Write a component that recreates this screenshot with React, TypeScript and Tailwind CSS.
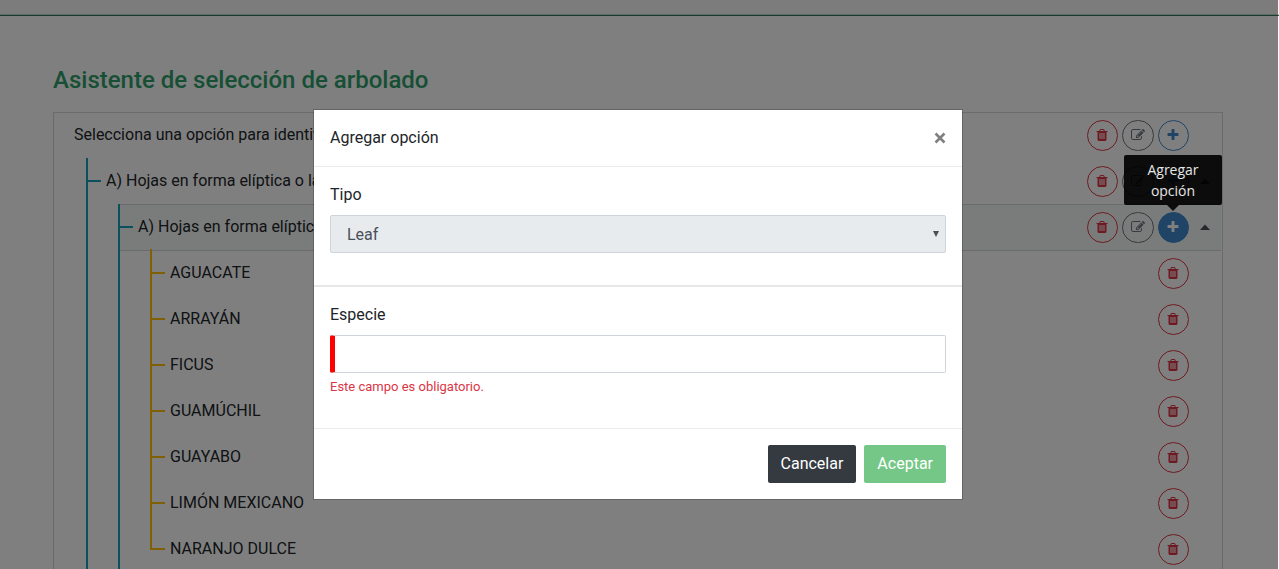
import { useState } from "react";
import type { ReactNode } from "react";

const TRASH =
  "M704 1376v-704q0-14-9-23t-23-9h-64q-14 0-23 9t-9 23v704q0 14 9 23t23 9h64q14 0 23-9t9-23zm256 0v-704q0-14-9-23t-23-9h-64q-14 0-23 9t-9 23v704q0 14 9 23t23 9h64q14 0 23-9t9-23zm256 0v-704q0-14-9-23t-23-9h-64q-14 0-23 9t-9 23v704q0 14 9 23t23 9h64q14 0 23-9t9-23zm-544-992h448l-48-117q-7-9-17-11h-317q-10 2-17 11zm928 32v64q0 14-9 23t-23 9h-96v948q0 83-47 143.5t-113 60.5h-832q-66 0-113-58.5t-47-141.5v-952h-96q-14 0-23-9t-9-23v-64q0-14 9-23t23-9h309l70-167q15-37 54-63t79-26h320q40 0 79 26t54 63l70 167h309q14 0 23 9t9 23z";
const EDIT =
  "M888 1184l116-116-152-152-116 116v56h96v96h56zm440-720q-16-16-33 1l-350 350q-17 17-1 33t33-1l350-350q17-17 1-33zm80 594v190q0 119-84.5 203.5t-203.5 84.5h-832q-119 0-203.5-84.5t-84.5-203.5v-832q0-119 84.5-203.5t203.5-84.5h832q63 0 117 25 15 7 18 23 3 17-9 29l-49 49q-14 14-32 8-23-6-45-6h-832q-66 0-113 47t-47 113v832q0 66 47 113t113 47h832q66 0 113-47t47-113v-126q0-13 9-22l64-64q15-15 35-7t20 29zm-96-738l288 288-672 672h-288v-288zm444 132l-92 92-288-288 92-92q28-28 68-28t68 28l152 152q28 28 28 68t-28 68z";
const PLUS =
  "M1600 736v192q0 40-28 68t-68 28h-416v416q0 40-28 68t-68 28h-192q-40 0-68-28t-28-68v-416h-416q-40 0-68-28t-28-68v-192q0-40 28-68t68-28h416v-416q0-40 28-68t68-28h192q40 0 68 28t28 68v416h416q40 0 68 28t28 68z";

function Icon({ d }: { d: string }) {
  return (
    <svg viewBox="0 0 1792 1792" className="size-3.5" fill="currentColor" aria-hidden="true">
      <path d={d} />
    </svg>
  );
}

const round = "flex h-[31px] items-center justify-center rounded-full border pb-px";

function DeleteButton() {
  return (
    <button aria-label="Eliminar" className={`${round} w-[31px] border-[#dc3545] pr-px text-[#dc3545]`}>
      <Icon d={TRASH} />
    </button>
  );
}

function EditButton() {
  return (
    <button aria-label="Editar" className={`${round} w-8 border-[#6c757d] text-[#6c757d]`}>
      <Icon d={EDIT} />
    </button>
  );
}

function AddButton({ active = false }: { active?: boolean }) {
  const tone = active ? "bg-[#3f88cc] text-white" : "text-[#3f88cc]";
  return (
    <button aria-label="Agregar opción" className={`${round} w-[31px] border-[#3f88cc] pr-px ${tone}`}>
      <Icon d={PLUS} />
    </button>
  );
}

function Row({
  label,
  tick = "",
  highlighted = false,
  collapsible = false,
  children,
}: {
  label: string;
  tick?: string;
  highlighted?: boolean;
  collapsible?: boolean;
  children: ReactNode;
}) {
  const frame = highlighted ? "border-[#d4d6d8] bg-[#f4f8f6]" : "border-transparent";
  return (
    <div className={`-mt-px flex h-[47px] items-center border-y ${frame}`}>
      <div className="flex min-w-0 flex-1 items-center pb-0.5">
        {tick && <span className={`h-0.5 w-[13px] shrink-0 ${tick}`} />}
        <span className={`truncate ${tick ? "pl-[5px]" : "pl-5"}`}>{label}</span>
      </div>
      <div className="flex gap-1">{children}</div>
      <div className="flex w-8 justify-center pb-px">
        {collapsible && (
          <button aria-label="Contraer" className="p-1 text-[#495057]">
            <svg viewBox="0 0 10 6" className="h-1.5 w-2.5" fill="currentColor" aria-hidden="true">
              <path d="M0 6L5 0.5L10 6Z" />
            </svg>
          </button>
        )}
      </div>
    </div>
  );
}

const SPECIES = ["AGUACATE", "ARRAYÁN", "FICUS", "GUAMÚCHIL", "GUAYABO", "LIMÓN MEXICANO", "NARANJO DULCE"];

function Tree() {
  return (
    <div className="border border-[#d4d6d8]">
      <div className="pr-px">
        <Row label="Selecciona una opción para identificar">
          <DeleteButton />
          <EditButton />
          <AddButton />
        </Row>
      </div>
      <ul className="ml-8 border-l-2 border-[#17a2b8]">
        <li>
          <div className="pr-px">
            <Row label="A) Hojas en forma elíptica o lanceolada" tick="bg-[#17a2b8]" collapsible>
              <DeleteButton />
              <EditButton />
              <AddButton />
            </Row>
          </div>
          <ul className="ml-[30px] border-l-2 border-[#17a2b8]">
            <li>
              <div className="pr-px">
                <Row label="A) Hojas en forma elíptica" tick="bg-[#17a2b8]" highlighted collapsible>
                  <DeleteButton />
                  <EditButton />
                  <div className="relative">
                    <AddButton active />
                    <div
                      role="tooltip"
                      className="absolute bottom-[38px] -left-[34px] z-30 w-[98px] rounded-xs bg-black/90 px-2 py-1 text-center font-['Open_Sans',sans-serif] text-sm leading-[21px] text-white/90"
                    >
                      Agregar opción
                      <svg
                        viewBox="0 0 12 6"
                        className="absolute top-full left-[43px] h-1.5 w-3"
                        aria-hidden="true"
                      >
                        <path d="M0 0H12L6 6Z" fillOpacity="0.9" />
                      </svg>
                    </div>
                  </div>
                </Row>
              </div>
              <ul className="ml-[30px]">
                {SPECIES.map((name) => (
                  <li
                    key={name}
                    className="relative pr-px pl-0.5 before:absolute before:-top-px before:bottom-0 before:left-0 before:w-0.5 before:bg-[#ffc107] last:before:bottom-[23px]"
                  >
                    <Row label={name} tick="bg-[#ffc107]">
                      <DeleteButton />
                    </Row>
                  </li>
                ))}
              </ul>
            </li>
          </ul>
        </li>
      </ul>
    </div>
  );
}

function Dialog() {
  const [species, setSpecies] = useState("");
  return (
    <div
      role="dialog"
      aria-modal="true"
      aria-labelledby="dialog-title"
      className="w-full max-w-[650px] border border-black/20 bg-white bg-clip-padding"
    >
      <header className="flex items-center justify-between border-b border-[#e9ecef] p-4">
        <h2 id="dialog-title">Agregar opción</h2>
        <button aria-label="Cerrar" className="text-[#808080]">
          <svg viewBox="0 0 12 12" className="size-3" stroke="currentColor" strokeWidth="2.6" aria-hidden="true">
            <path d="M1.5 1.5L10.5 10.5M10.5 1.5L1.5 10.5" />
          </svg>
        </button>
      </header>
      <div className="px-4 pt-4 pb-8">
        <label htmlFor="tipo" className="mb-2 block">
          Tipo
        </label>
        <div className="relative">
          <select
            id="tipo"
            disabled
            className="block h-[38px] w-full appearance-none rounded-xs border border-[#ced4da] bg-[#e8ebee] px-4 pt-0.5 text-[#495057] opacity-100"
          >
            <option>Leaf</option>
          </select>
          <svg
            viewBox="0 0 6 6"
            className="pointer-events-none absolute top-4 right-[7px] size-1.5"
            fill="#495057"
            aria-hidden="true"
          >
            <path d="M0 0H6L3 6Z" />
          </svg>
        </div>
      </div>
      <div className="border-t-2 border-[#e5e7e9] px-4 pt-4 pb-8">
        <label htmlFor="especie" className="mb-2 block">
          Especie
        </label>
        <input
          id="especie"
          value={species}
          onChange={(event) => setSpecies(event.target.value)}
          aria-describedby="especie-error"
          className="block h-[38px] w-full rounded-xs border border-l-[5px] border-[#ced4da] border-l-[#ff0000] px-3"
        />
        <p id="especie-error" className="mt-1 text-[13px] leading-[19px] text-[#dc3545]">
          Este campo es obligatorio.
        </p>
      </div>
      <footer className="flex justify-end gap-2 border-t border-[#e9ecef] p-4">
        <button className="h-[38px] rounded-xs bg-[#343a40] px-[13px] text-white">Cancelar</button>
        <button className="h-[38px] rounded-xs bg-[#75c787] px-[13px] text-white">Aceptar</button>
      </footer>
    </div>
  );
}

export default function App() {
  return (
    <div className="relative h-screen overflow-hidden bg-white font-[Roboto,sans-serif] text-base text-[#212529]">
      <div className="h-[15px] border-b border-[#c8d0cc] bg-[#f8f8f8]" />
      <div className="h-px bg-[#2a7a58]" />
      <main className="px-[53px] pt-12 pr-14">
        <h1 className="mb-4 text-2xl font-medium text-[#2e9e6b]">Asistente de selección de arbolado</h1>
        <Tree />
      </main>
      <div className="absolute inset-0 right-px z-10 flex items-start justify-center bg-black/50 pt-[109px] pr-0.5">
        <Dialog />
      </div>
    </div>
  );
}
